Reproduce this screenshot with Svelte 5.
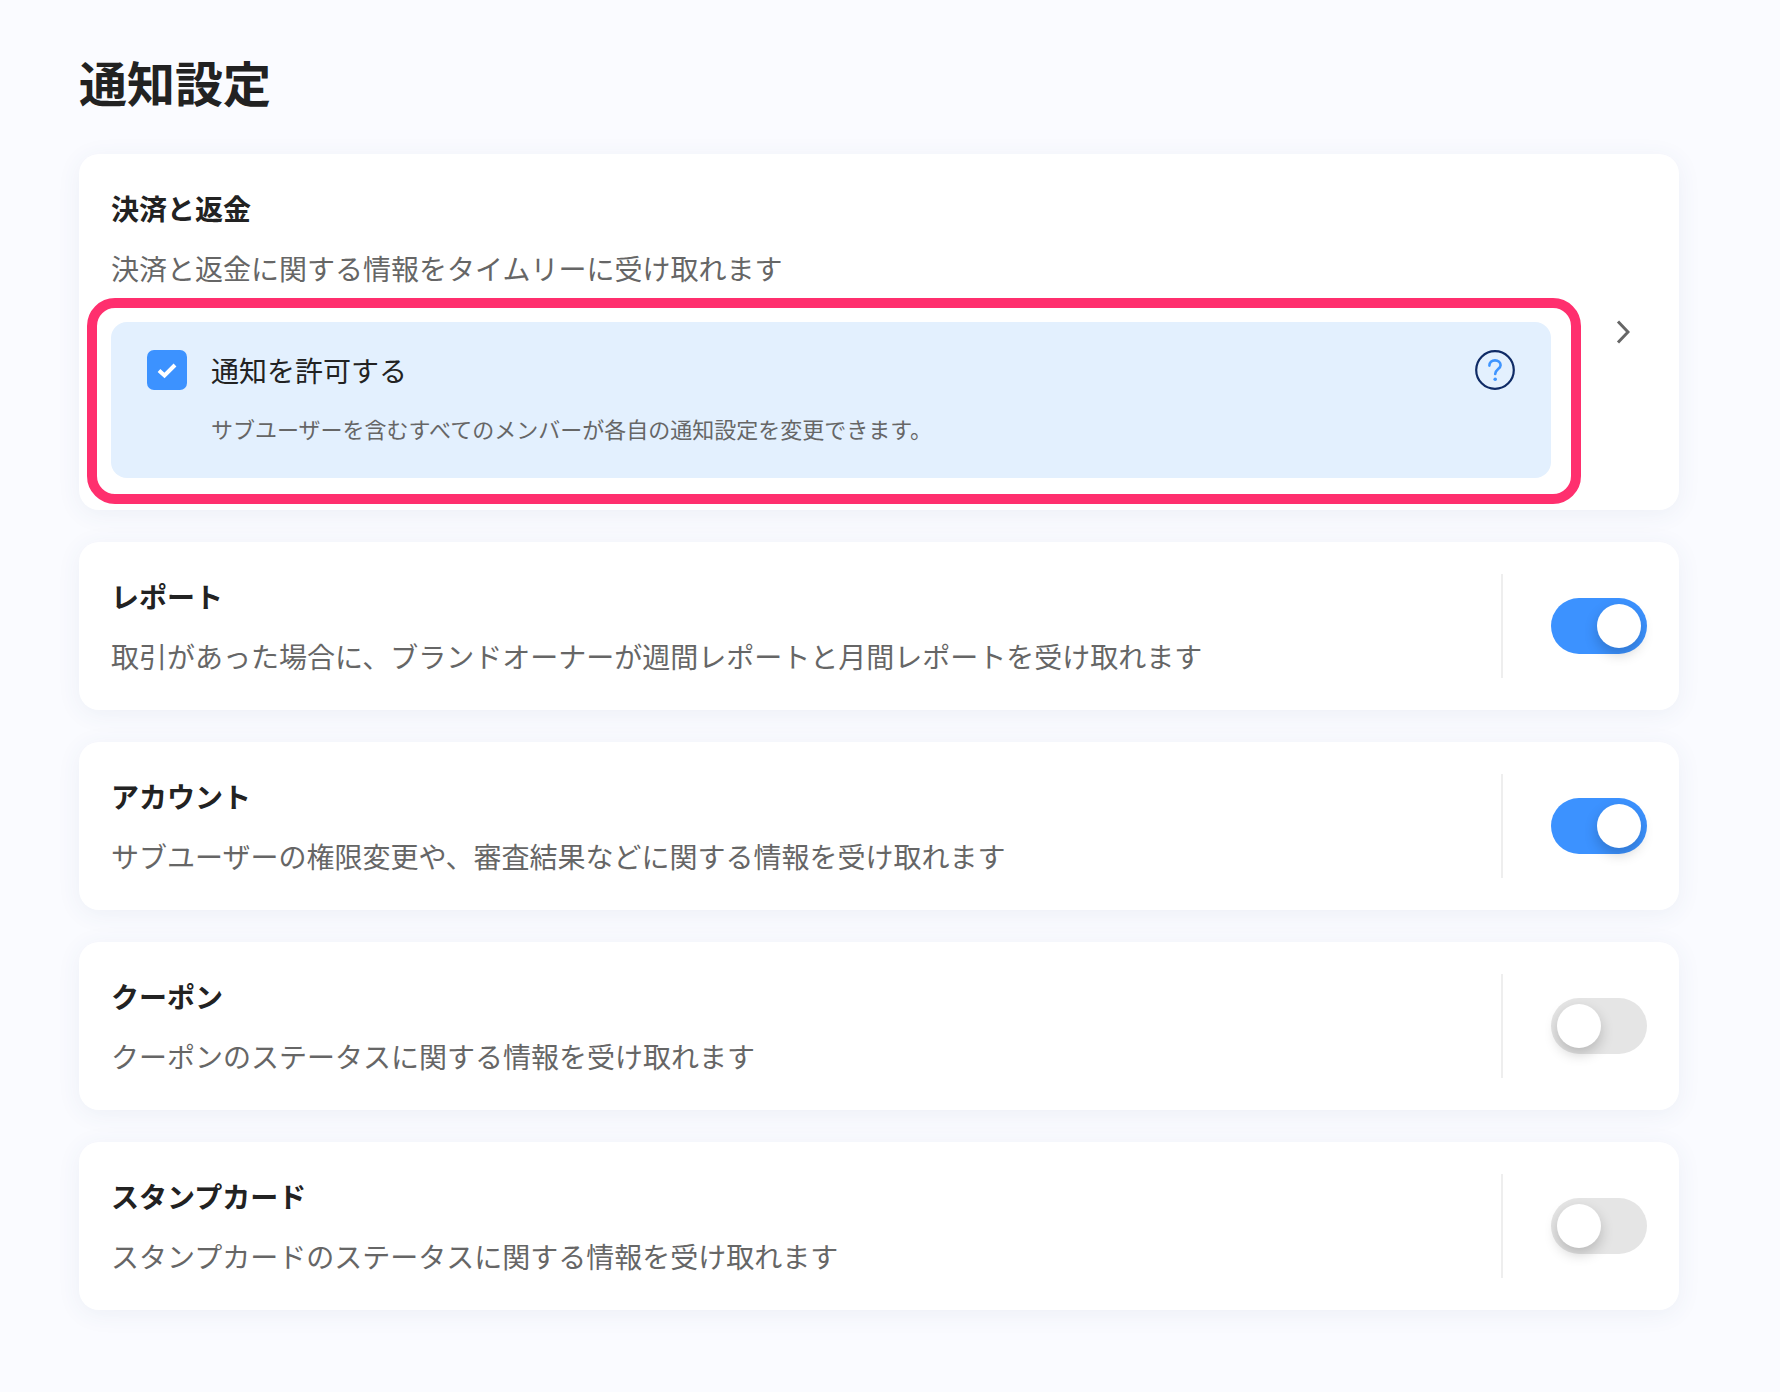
<script lang="ts">
	const rows = [
		{ title: 'レポート', desc: '取引があった場合に、ブランドオーナーが週間レポートと月間レポートを受け取れます', on: true },
		{ title: 'アカウント', desc: 'サブユーザーの権限変更や、審査結果などに関する情報を受け取れます', on: true },
		{ title: 'クーポン', desc: 'クーポンのステータスに関する情報を受け取れます', on: false },
		{ title: 'スタンプカード', desc: 'スタンプカードのステータスに関する情報を受け取れます', on: false }
	];
</script>

<main class="page">
	<h1>通知設定</h1>

	<section class="card payment">
		<div class="payment-main">
			<h2>決済と返金</h2>
			<p class="desc">決済と返金に関する情報をタイムリーに受け取れます</p>
			<div class="allow-box">
				<!-- highlight frame drawn over the box -->
				<div class="highlight"></div>
				<div class="allow-row">
					<span class="checkbox">
						<svg width="22" height="18" viewBox="0 0 22 18" aria-hidden="true">
							<path d="M3 9.5 L8.5 14.5 L19 4" fill="none" stroke="#fff" stroke-width="4" />
						</svg>
					</span>
					<span class="allow-label">通知を許可する</span>
					<svg class="help" width="40" height="40" viewBox="0 0 40 40" aria-hidden="true">
						<circle cx="20" cy="20" r="18.8" fill="none" stroke="#0f2b66" stroke-width="2.2" />
						<path d="M14.4 15.6 C14.4 12.4 16.8 10.4 20 10.4 C23.2 10.4 25.6 12.4 25.6 15.2 C25.6 18.8 20.2 19.4 20.2 24" fill="none" stroke="#3f95ff" stroke-width="2.6" stroke-linecap="round" />
						<circle cx="20.2" cy="29.2" r="1.8" fill="#3f95ff" />
					</svg>
				</div>
				<p class="allow-note">サブユーザーを含むすべてのメンバーが各自の通知設定を変更できます。</p>
			</div>
		</div>
		<div class="chevron">
			<svg width="14" height="24" viewBox="0 0 14 24" aria-hidden="true">
				<path d="M2 1.5 L12 12 L2 22.5" fill="none" stroke="#666" stroke-width="3" />
			</svg>
		</div>
	</section>

	{#each rows as row}
		<section class="card setting">
			<div class="setting-text">
				<h2>{row.title}</h2>
				<p class="desc">{row.desc}</p>
			</div>
			<div class="divider"></div>
			<div class="toggle" class:on={row.on}>
				<span class="knob"></span>
			</div>
		</section>
	{/each}
</main>

<style>
	:global(body) {
		background: #fafbff;
	}
	.page {
		box-sizing: border-box;
		width: 1780px;
		height: 1392px;
		padding: 48px 101px 0 79px;
		display: flex;
		flex-direction: column;
		font-family: 'Noto Sans CJK JP', sans-serif;
		color: #222;
	}
	h1 {
		margin: 0 0 40px;
		font-size: 48px;
		line-height: 66px;
		font-weight: 700;
	}
	.card {
		box-sizing: border-box;
		background: #fff;
		border-radius: 20px;
		padding: 32px;
		margin-bottom: 32px;
		box-shadow: 0 4px 24px rgba(60, 80, 130, 0.07);
		display: flex;
		align-items: center;
	}
	h2 {
		margin: 0 0 16px;
		font-size: 28px;
		line-height: 44px;
		font-weight: 700;
		color: #222;
	}
	.desc {
		margin: 0;
		font-size: 28px;
		line-height: 44px;
		color: #666;
	}
	.payment-main {
		width: 1440px;
		flex: none;
	}
	.allow-box {
		position: relative;
		margin-top: 32px;
		height: 156px;
		box-sizing: border-box;
		padding: 28px 36px 0;
		background: #e3f0fe;
		border-radius: 16px;
	}
	.highlight {
		position: absolute;
		left: -24px;
		right: -30px;
		top: -24px;
		bottom: -26px;
		border: 10px solid #ff2f6e;
		border-radius: 28px;
		pointer-events: none;
	}
	.allow-row {
		display: flex;
		align-items: center;
		gap: 24px;
		height: 40px;
	}
	.checkbox {
		width: 40px;
		height: 40px;
		border-radius: 7px;
		background: #3c92ff;
		display: flex;
		align-items: center;
		justify-content: center;
	}
	.allow-label {
		flex: 1;
		font-size: 28px;
		line-height: 40px;
		color: #222;
	}
	.help {
		display: block;
	}
	.allow-note {
		margin: 20px 0 0 64px;
		font-size: 22px;
		line-height: 36px;
		color: #666;
	}
	.chevron {
		margin-left: 48px;
		width: 48px;
		display: flex;
		justify-content: center;
	}
	.setting {
		height: 168px;
	}
	.setting-text {
		flex: 1;
	}
	.divider {
		width: 2px;
		height: 104px;
		background: #eeeeee;
		margin-right: 48px;
	}
	.toggle {
		position: relative;
		width: 96px;
		height: 56px;
		border-radius: 28px;
		background: #e5e5e5;
	}
	.toggle.on {
		background: #3c92ff;
	}
	.knob {
		position: absolute;
		top: 6px;
		left: 6px;
		width: 44px;
		height: 44px;
		border-radius: 50%;
		background: #fff;
		box-shadow: 0 6px 14px rgba(0, 0, 0, 0.2);
	}
	.toggle.on .knob {
		left: 46px;
	}
</style>
